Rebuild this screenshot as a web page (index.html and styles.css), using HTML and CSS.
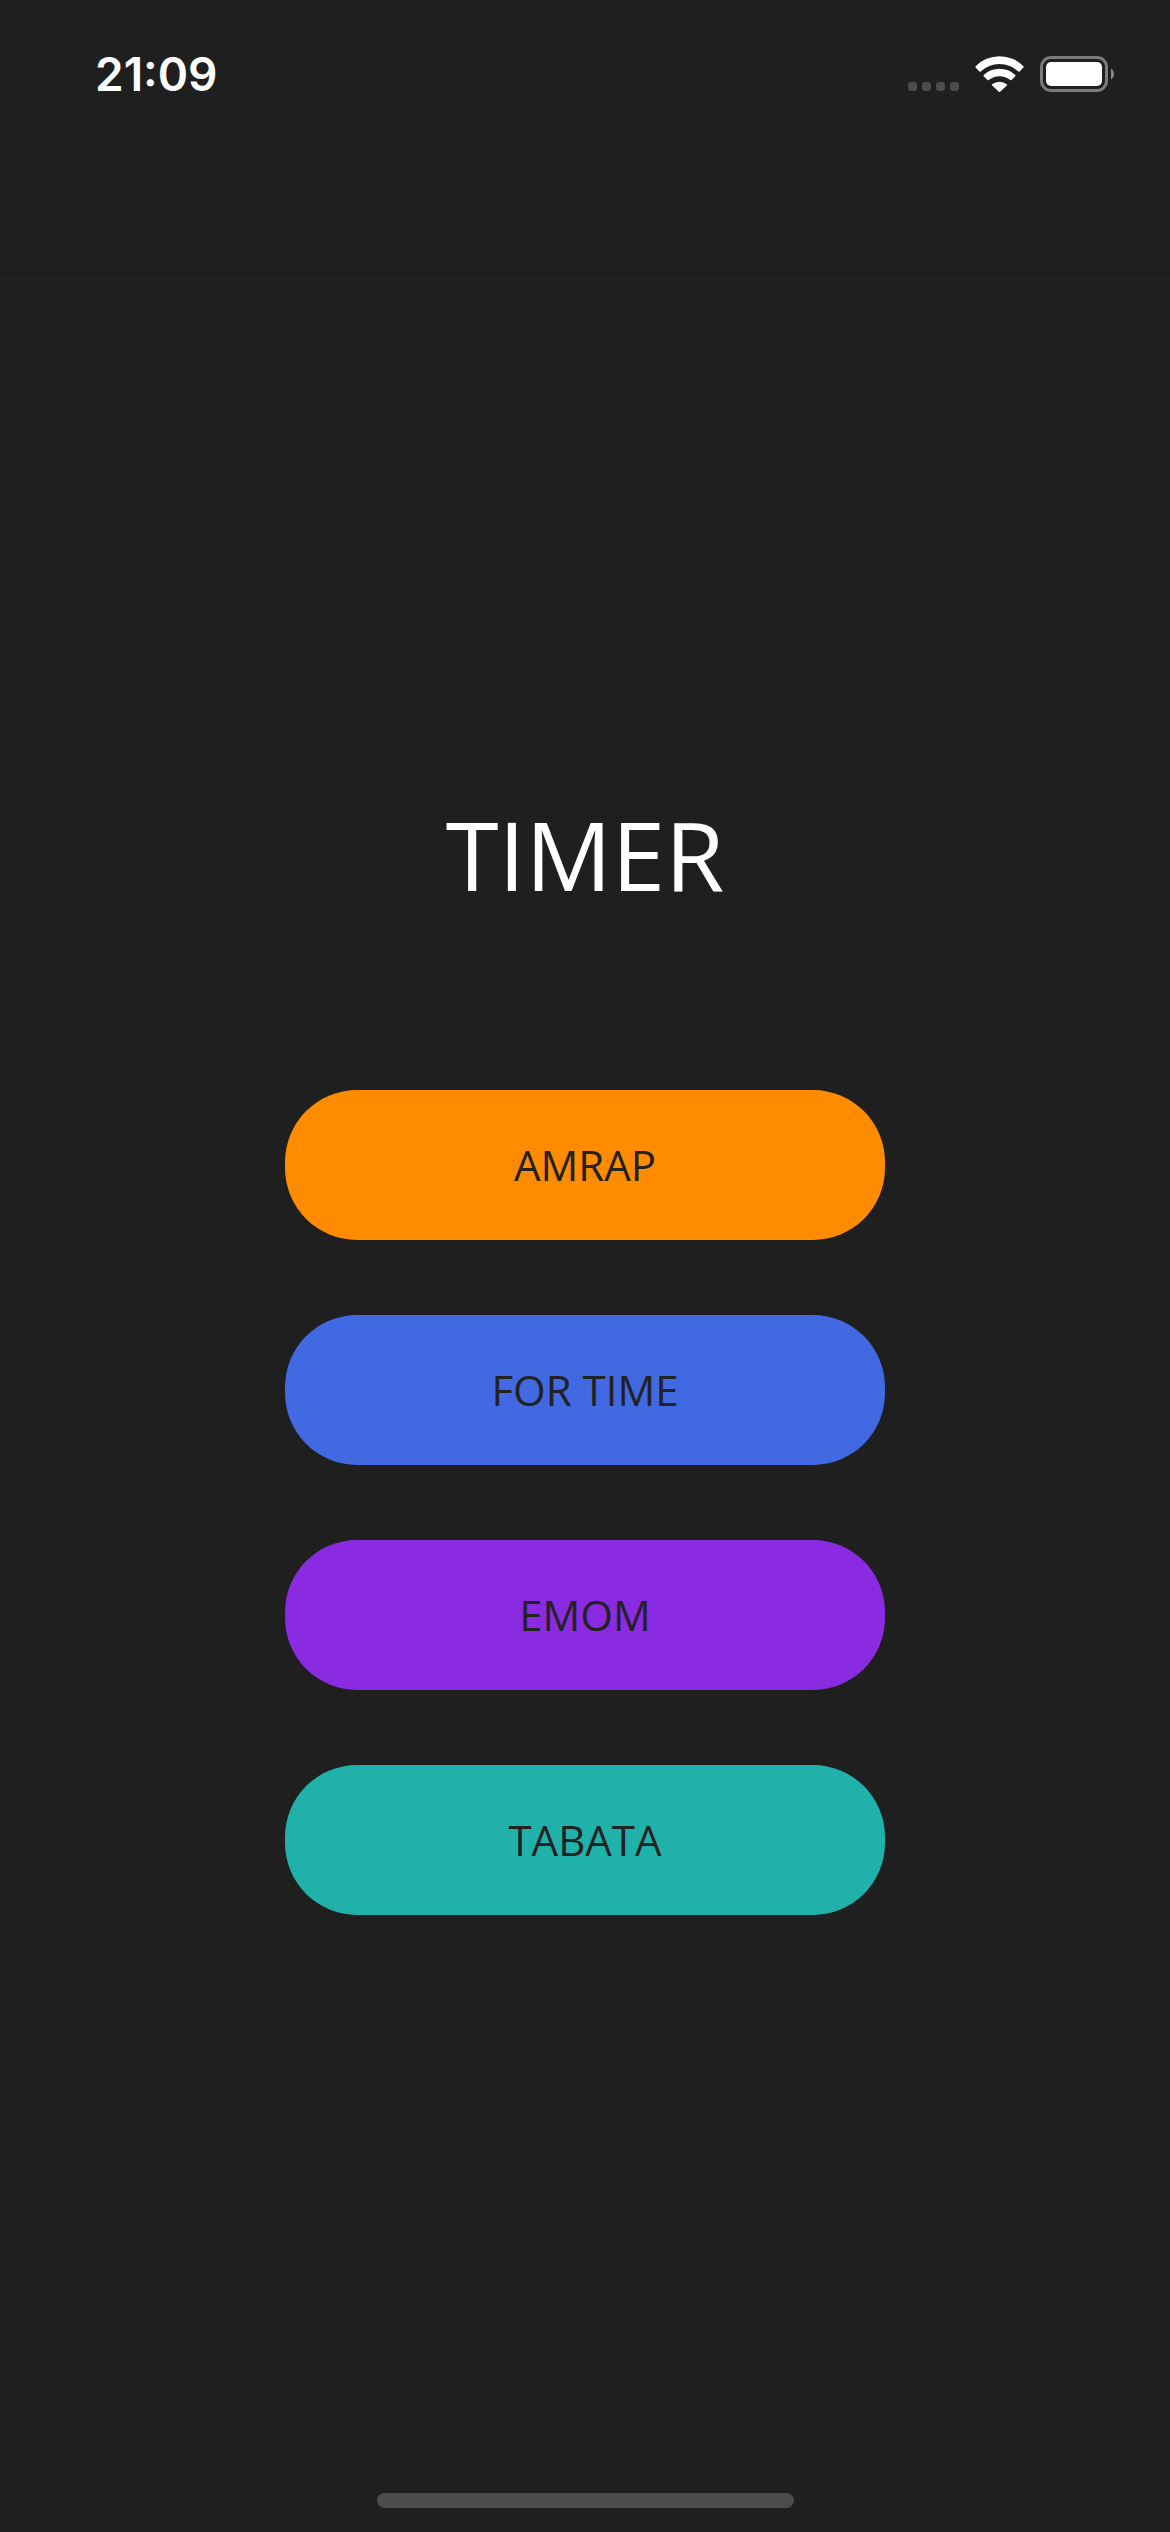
FILE: index.html
```html
<!DOCTYPE html>
<html lang="en">
<head>
<meta charset="utf-8">
<meta name="viewport" content="width=device-width, initial-scale=1">
<title>Timer</title>
<link rel="stylesheet" href="styles.css">
</head>
<body>
<header class="top-bar">
  <time class="clock">21:09</time>
  <div class="status-icons">
    <svg class="icon-signal" width="51" height="9" viewBox="0 0 51 9" aria-hidden="true">
      <rect width="9" height="9" rx="3"/>
      <rect x="14" width="9" height="9" rx="3"/>
      <rect x="28" width="9" height="9" rx="3"/>
      <rect x="42" width="9" height="9" rx="3"/>
    </svg>
    <svg class="icon-wifi" width="49" height="36" viewBox="0 0 49 36" aria-hidden="true">
      <path d="M.6 10.200A33.500 33.500 0 0 1 48.400 10.200Q48.900 10.800 48.400 11.400L44.600 15.500Q44 16 43.400 15.500A27.500 27.500 0 0 0 5.600 15.500Q5 16 4.400 15.500L.6 11.400Q.1 10.800 .6 10.200Z"/>
      <path d="M8.700 19A22.800 22.800 0 0 1 40.300 19Q40.800 19.600 40.300 20.200L36.500 24.100Q35.900 24.600 35.300 24.100A16.700 16.700 0 0 0 13.700 24.100Q13.100 24.600 12.500 24.100L8.700 20.200Q8.200 19.600 8.700 19Z"/>
      <path d="M17.200 28.300A11.500 11.500 0 0 1 31.800 28.300Q32.400 28.900 31.800 29.500L25.100 35.700Q24.500 36.200 23.900 35.700L17.200 29.500Q16.600 28.900 17.200 28.300Z"/>
    </svg>
    <svg class="icon-battery" width="75" height="36" viewBox="0 0 75 36" aria-hidden="true">
      <rect class="shell" x="1.500" y="1.500" width="65" height="33" rx="9.500"/>
      <rect class="charge" x="6" y="6" width="56" height="24" rx="5"/>
      <path class="cap" d="M71 12.500v11a6.500 6.500 0 0 0 0-11Z"/>
    </svg>
  </div>
</header>
<main class="menu">
  <h1 class="title">TIMER</h1>
  <nav class="modes" aria-label="Timer modes">
    <button class="mode amrap" type="button">AMRAP</button>
    <button class="mode for-time" type="button">FOR TIME</button>
    <button class="mode emom" type="button">EMOM</button>
    <button class="mode tabata" type="button">TABATA</button>
  </nav>
</main>
<footer class="home"><div class="home-indicator"></div></footer>
</body>
</html>
```
FILE: styles.css
```css
* { box-sizing: border-box; }

body {
  margin: 0;
  min-height: 100vh;
  display: flex;
  flex-direction: column;
  background: #1f1f1f;
  color: #fff;
  font-family: "Open Sans", sans-serif;
}

.top-bar {
  height: 274px;
  padding: 46px 55px 0 95px;
  display: flex;
  justify-content: space-between;
  align-items: flex-start;
  border-bottom: 1px solid #151515;
}

.clock {
  font: 600 46px/56px Inter, sans-serif;
}

.status-icons {
  height: 56px;
  display: flex;
  align-items: center;
  gap: 16px;
}

.icon-signal { fill: #4c4c4c; margin-top: 25px; }
.icon-wifi { fill: #fff; }
.shell { fill: none; stroke: #7b7b7b; stroke-width: 3; }
.charge { fill: #fff; }
.cap { fill: #868686; }

.menu {
  flex: 1;
  padding-bottom: 64px;
  display: flex;
  flex-direction: column;
  align-items: center;
  justify-content: center;
  gap: 170px;
}

.title {
  margin: 0;
  font-size: 96px;
  line-height: 132px;
  font-weight: 400;
}

.modes {
  width: 600px;
  max-width: 90%;
  margin: 0;
  display: flex;
  flex-direction: column;
  gap: 75px;
}

.mode {
  height: 150px;
  padding: 0;
  border: 0;
  border-radius: 72px;
  color: #222;
  font: 400 42px/58px "Open Sans", sans-serif;
}

.title { letter-spacing: normal; }

.amrap { background: #ff8c00; }
.for-time { background: #4169e1; }
.emom { background: #8a2be2; }
.tabata { background: #20b2aa; }

.home {
  padding-bottom: 24px;
  display: flex;
  justify-content: center;
}

.home-indicator {
  width: 417px;
  height: 15px;
  border-radius: 8px;
  background: #4c4c4c;
}
```
